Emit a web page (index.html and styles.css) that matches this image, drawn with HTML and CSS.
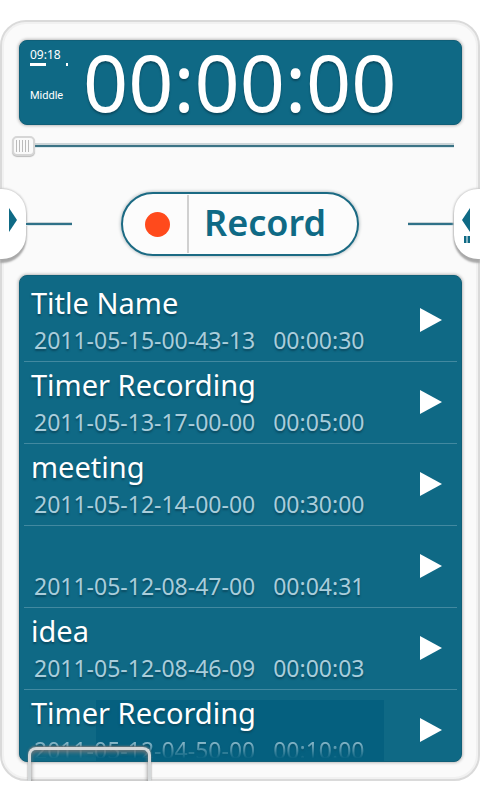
FILE: index.html
```html
<!DOCTYPE html>
<html lang="en">
<head>
    <meta charset="UTF-8">
    <meta name="viewport" content="width=device-width, initial-scale=1.0">
    <title>Voice Recorder</title>
    <link rel="stylesheet" href="styles.css">
</head>
<body>
    <main class="recorder">
        <section class="display">
            <div class="status">
                <span class="clock">09:18</span>
                <span class="battery"><i class="level"></i><i class="full"></i></span>
                <span class="quality">Middle</span>
            </div>
            <div class="counter">00:00:00</div>
        </section>

        <input class="seek" type="range" min="0" max="100" value="0" aria-label="Position">

        <div class="controls">
            <div class="side">
                <button class="tab tab-left" aria-label="Open left panel">
                    <svg width="8" height="24" viewBox="0 0 8 24"><path d="M0 0L8 12L0 24Z"/></svg>
                </button>
                <span class="wire"></span>
            </div>
            <button class="record">
                <span class="lamp"><i class="dot"></i></span>
                <span class="record-text">Record</span>
            </button>
            <div class="side">
                <span class="wire"></span>
                <button class="tab tab-right" aria-label="Open right panel">
                    <svg width="8" height="36" viewBox="0 0 8 36"><path d="M8 0V24L0 12ZM2 28H4.500V35H2ZM5.500 28H8V35H5.500Z"/></svg>
                </button>
            </div>
        </div>

        <div class="list">
            <ul class="rows">
                <li class="row">
                    <div class="info">
                        <div class="title">Title Name</div>
                        <div class="meta"><span>2011-05-15-00-43-13</span><span>00:00:30</span></div>
                    </div>
                    <button class="play" aria-label="Play"><svg width="22" height="24" viewBox="0 0 22 24"><path d="M0 0L22 12L0 24Z"/></svg></button>
                </li>
                <li class="row">
                    <div class="info">
                        <div class="title">Timer Recording</div>
                        <div class="meta"><span>2011-05-13-17-00-00</span><span>00:05:00</span></div>
                    </div>
                    <button class="play" aria-label="Play"><svg width="22" height="24" viewBox="0 0 22 24"><path d="M0 0L22 12L0 24Z"/></svg></button>
                </li>
                <li class="row">
                    <div class="info">
                        <div class="title">meeting</div>
                        <div class="meta"><span>2011-05-12-14-00-00</span><span>00:30:00</span></div>
                    </div>
                    <button class="play" aria-label="Play"><svg width="22" height="24" viewBox="0 0 22 24"><path d="M0 0L22 12L0 24Z"/></svg></button>
                </li>
                <li class="row">
                    <div class="info">
                        <div class="title"></div>
                        <div class="meta"><span>2011-05-12-08-47-00</span><span>00:04:31</span></div>
                    </div>
                    <button class="play" aria-label="Play"><svg width="22" height="24" viewBox="0 0 22 24"><path d="M0 0L22 12L0 24Z"/></svg></button>
                </li>
                <li class="row">
                    <div class="info">
                        <div class="title">idea</div>
                        <div class="meta"><span>2011-05-12-08-46-09</span><span>00:00:03</span></div>
                    </div>
                    <button class="play" aria-label="Play"><svg width="22" height="24" viewBox="0 0 22 24"><path d="M0 0L22 12L0 24Z"/></svg></button>
                </li>
                <li class="row row-shade">
                    <div class="info">
                        <div class="title">Timer Recording</div>
                        <div class="meta"><span>2011-05-12-04-50-00</span><span>00:10:00</span></div>
                    </div>
                    <button class="play" aria-label="Play"><svg width="22" height="24" viewBox="0 0 22 24"><path d="M0 0L22 12L0 24Z"/></svg></button>
                </li>
            </ul>
        </div>
        <div class="drawer"></div>
    </main>
</body>
</html>
```
FILE: styles.css
```css
* {
    box-sizing: border-box;
}
body {
    margin: 0;
    background: #fff;
    font-family: "Noto Sans", "Open Sans", sans-serif;
}
button {
    padding: 0;
    border: none;
    font-family: inherit;
    cursor: pointer;
}
svg {
    display: block;
    fill: #0f6a85;
}
.recorder {
    position: relative;
    display: flex;
    flex-direction: column;
    height: calc(100vh - 39px);
    margin-top: 20px;
    padding: 18px 16px 17px;
    border: 2px solid #dadada;
    border-radius: 26px;
    background: #fafafa;
    box-shadow: inset 0 0 0 2px #f1f1f1;
}
.display {
    display: flex;
    align-items: flex-start;
    height: 85px;
    margin: 0 0 0 1px;
    padding-left: 10px;
    border: 1px solid #0f5f78;
    border-radius: 8px;
    background: #0f6985;
    box-shadow: 0 0 3px 1px #bbb;
    color: #fff;
}
.status {
    display: flex;
    flex-direction: column;
    width: 52px;
    padding-top: 6px;
}
.clock {
    font-size: 12px;
    line-height: 16px;
}
.battery {
    display: flex;
    justify-content: space-between;
    width: 38px;
    height: 3px;
    margin-bottom: 22px;
}
.level {
    width: 16px;
    background: #fff;
}
.full {
    width: 2px;
    background: #fff;
}
.quality {
    font-family: Roboto, sans-serif;
    font-size: 11px;
    line-height: 16px;
}
.counter {
    padding-left: 1px;
    font-size: 79px;
    line-height: 82px;
    text-shadow: 0 2px 2px #0a4a60;
}
.seek {
    -webkit-appearance: none;
    appearance: none;
    height: 20px;
    margin: 11px 8px 0 -6px;
    background: linear-gradient(#ccd5d8, #ccd5d8 2px, #3b7385 2px, #3b7385 4px, #dce8ec 4px) 0 7px / 100% 5px no-repeat;
}
.seek::-webkit-slider-thumb {
    -webkit-appearance: none;
    width: 23px;
    height: 20px;
    border: 2px solid #d6d6d6;
    border-radius: 5px;
    background: repeating-linear-gradient(90deg, #bbb, #bbb 1px, #fafafa 1px, #fafafa 3px) 2px 2px / 15px 12px no-repeat, #fafafa;
    box-shadow: 0 1px 1px #bbb;
}
.controls {
    display: flex;
    justify-content: space-between;
    align-items: center;
    height: 72px;
    margin: 32px -18px 0;
}
.side {
    display: flex;
    align-items: center;
    width: 72px;
}
.wire {
    flex: 1;
    height: 4px;
    border-top: 1px solid #c9d2d5;
    border-bottom: 1px solid #dbe6ea;
    background: #2f7188;
}
.tab {
    display: flex;
    align-items: center;
    width: 26px;
    height: 70px;
    background: #fff;
    box-shadow: 0 4px 2px #a8a8a8, 0 0 2px 1px #ccc;
}
.tab-left {
    justify-content: flex-end;
    padding: 0 9px 9px 0;
    border-radius: 0 24px 24px 0;
}
.tab-right {
    padding: 4px 0 0 8px;
    border-radius: 24px 0 0 24px;
}
.record {
    display: flex;
    align-items: center;
    width: 238px;
    height: 64px;
    border: 2px solid #1b6a83;
    border-radius: 32px;
    background: #fcfcfc;
    box-shadow: 0 0 3px 1px #c0c8cb;
}
.lamp {
    display: flex;
    align-items: center;
    justify-content: flex-end;
    width: 66px;
    height: 58px;
    padding-right: 17px;
    border-right: 2px solid #d0d0d0;
}
.dot {
    width: 25px;
    height: 25px;
    border-radius: 50%;
    background: #ff4a1c;
}
.record-text {
    padding: 0 0 3px 15px;
    color: #0f6a85;
    font-size: 36px;
    font-weight: 600;
    line-height: 44px;
}
.list {
    flex: 1;
    min-height: 0;
    margin: 15px 0 0 1px;
    padding: 4px 4px 0;
    border: 1px solid #0f5f78;
    border-radius: 8px;
    background: #0f6985;
    box-shadow: 0 0 3px 1px #bbb;
    overflow: hidden;
}
.rows {
    margin: 0;
    padding: 0;
    list-style: none;
}
.row {
    display: flex;
    justify-content: space-between;
    align-items: center;
    height: 82px;
    padding: 0 15px 2px 7px;
    border-bottom: 1px solid #4289a0;
}
.row-shade {
    background: linear-gradient(#05607f, #05607f) 72px 10px / 288px 100% no-repeat;
}
/* the cut-off row fades out at the bottom of the list */
.row-shade .meta {
    -webkit-mask-image: linear-gradient(#000 15%, transparent 75%);
    mask-image: linear-gradient(#000 15%, transparent 75%);
}
.title {
    height: 40px;
    color: #fff;
    font-size: 29px;
    line-height: 40px;
    text-shadow: 0 2px 2px #0a4a60;
}
.meta {
    display: flex;
    gap: 18px;
    padding-left: 3px;
    color: #a9cddb;
    font-size: 23px;
    line-height: 34px;
    text-shadow: 0 2px 2px #0a4a60;
}
.play {
    background: none;
}
.play svg {
    fill: #fff;
}
.drawer {
    position: absolute;
    left: 26px;
    bottom: -2px;
    width: 123px;
    height: 34px;
    border: 3px solid #d5d8d9;
    border-bottom: none;
    border-radius: 8px 8px 0 0;
    box-shadow: 0 -1px 2px #777, inset 0 2px 4px #777;
}
```
